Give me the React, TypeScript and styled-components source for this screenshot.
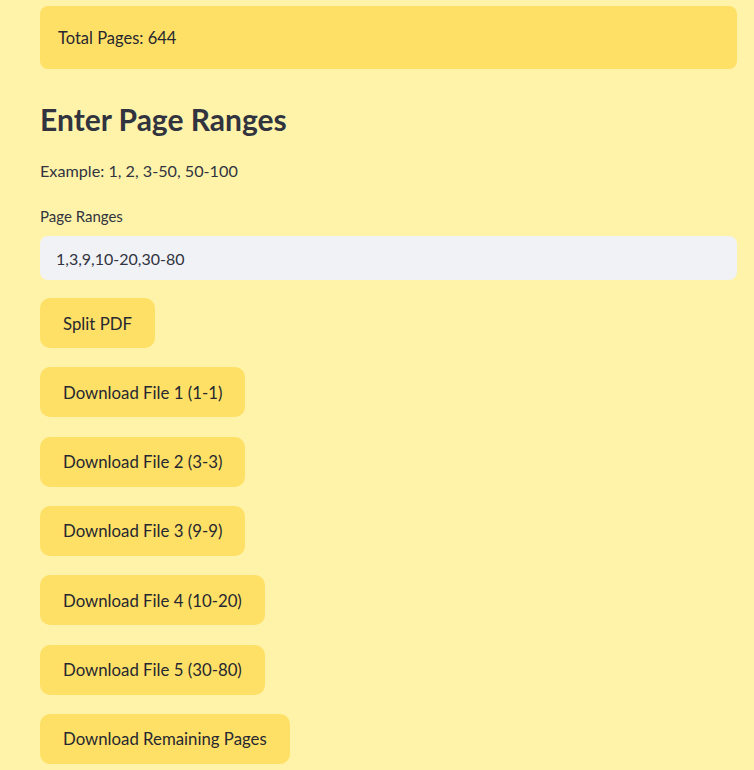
import React from "react";
import styled, { createGlobalStyle } from "styled-components";

const Global = createGlobalStyle`
  html, body { margin: 0; padding: 0; background: #fff3aa; }
  body { font-family: Lato, "Noto Sans", sans-serif; color: #31333f; }
`;

const Page = styled.div`
  min-height: 770px;
  background: #fff3aa;
  padding: 6px 17px 0 40px;
  box-sizing: border-box;
  display: flex;
  flex-direction: column;
  align-items: flex-start;
`;

const InfoBox = styled.div`
  align-self: stretch;
  height: 63px;
  box-sizing: border-box;
  background: #ffe066;
  border-radius: 8px;
  padding: 0 18px;
  display: flex;
  align-items: center;
  font-size: 16.5px;
  color: #262730;
`;

const Heading = styled.h3`
  margin: 33px 0 0;
  font-size: 30px;
  line-height: 34px;
  font-weight: 700;
  color: #31333f;
`;

const Paragraph = styled.p`
  margin: 23px 0 0;
  font-size: 16.2px;
  line-height: 24px;
`;

const Label = styled.label`
  margin-top: 23px;
  font-size: 15px;
  line-height: 20px;
`;

const Input = styled.input`
  align-self: stretch;
  margin-top: 10px;
  height: 44px;
  box-sizing: border-box;
  border: none;
  outline: none;
  border-radius: 8px;
  background: #f0f2f6;
  padding: 0 16px;
  font-family: inherit;
  font-size: 16px;
  color: #31333f;
`;

const Buttons = styled.div`
  margin-top: 18px;
  display: flex;
  flex-direction: column;
  align-items: flex-start;
  gap: 19.33px;
`;

const Button = styled.button`
  height: 50px;
  box-sizing: border-box;
  border: none;
  border-radius: 10px;
  background: #ffe066;
  padding: 0 23px;
  font-family: inherit;
  font-size: 16.8px;
  color: #262730;
  cursor: pointer;
`;

const downloads = [
  "Download File 1 (1-1)",
  "Download File 2 (3-3)",
  "Download File 3 (9-9)",
  "Download File 4 (10-20)",
  "Download File 5 (30-80)",
  "Download Remaining Pages",
];

export default function App() {
  return (
    <>
      <Global />
      <Page>
        <InfoBox>Total Pages: 644</InfoBox>
        <Heading>Enter Page Ranges</Heading>
        <Paragraph>Example: 1, 2, 3-50, 50-100</Paragraph>
        <Label htmlFor="ranges">Page Ranges</Label>
        <Input id="ranges" defaultValue="1,3,9,10-20,30-80" />
        <Buttons>
          <Button>Split PDF</Button>
          {downloads.map((d) => (
            <Button key={d}>{d}</Button>
          ))}
        </Buttons>
      </Page>
    </>
  );
}
